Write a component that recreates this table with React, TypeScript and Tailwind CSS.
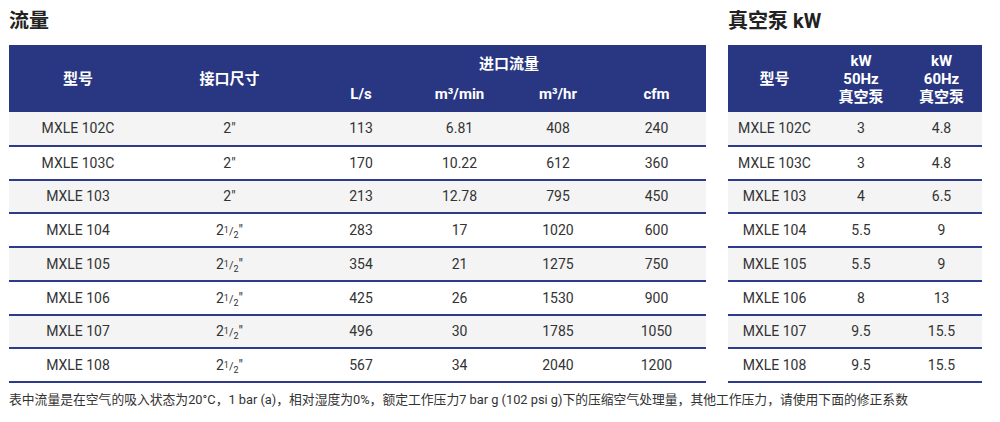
import React from 'react';

const FONT = { fontFamily: 'Roboto, "Noto Sans CJK SC", sans-serif' };

type Row = { model: string; size: 'two' | 'half'; ls: string; mmin: string; mhr: string; cfm: string };

const flowRows: Row[] = [
  { model: 'MXLE 102C', size: 'two', ls: '113', mmin: '6.81', mhr: '408', cfm: '240' },
  { model: 'MXLE 103C', size: 'two', ls: '170', mmin: '10.22', mhr: '612', cfm: '360' },
  { model: 'MXLE 103', size: 'two', ls: '213', mmin: '12.78', mhr: '795', cfm: '450' },
  { model: 'MXLE 104', size: 'half', ls: '283', mmin: '17', mhr: '1020', cfm: '600' },
  { model: 'MXLE 105', size: 'half', ls: '354', mmin: '21', mhr: '1275', cfm: '750' },
  { model: 'MXLE 106', size: 'half', ls: '425', mmin: '26', mhr: '1530', cfm: '900' },
  { model: 'MXLE 107', size: 'half', ls: '496', mmin: '30', mhr: '1785', cfm: '1050' },
  { model: 'MXLE 108', size: 'half', ls: '567', mmin: '34', mhr: '2040', cfm: '1200' },
];

const kwRows = [
  ['MXLE 102C', '3', '4.8'],
  ['MXLE 103C', '3', '4.8'],
  ['MXLE 103', '4', '6.5'],
  ['MXLE 104', '5.5', '9'],
  ['MXLE 105', '5.5', '9'],
  ['MXLE 106', '8', '13'],
  ['MXLE 107', '9.5', '15.5'],
  ['MXLE 108', '9.5', '15.5'],
];

const Size = ({ kind }: { kind: 'two' | 'half' }) =>
  kind === 'two' ? (
    <span>2"</span>
  ) : (
    <span>
      2<span className="relative -top-[2px] text-[9px]">1</span>
      <span className="text-[11px]">/</span>
      <span className="relative top-[3px] text-[9px]">2</span>"
    </span>
  );

const td = 'h-[33.75px] text-center border-b-2 border-[#2e3a8a] p-0 pt-[1px]';

export default function App() {
  return (
    <div className="w-[1000px] h-[422px] bg-white text-[#333] pl-[9px] pt-[8px]" style={FONT}>
      <div className="flex gap-[22px]">
        {/* flow table */}
        <div className="w-[697px]">
          <h2 className="text-[20px] font-bold text-[#222] leading-[26px] h-[37px]">流量</h2>
          <table className="w-full border-collapse text-[14px]">
            <colgroup>
              <col className="w-[138px]" />
              <col className="w-[165px]" />
              <col className="w-[98px]" />
              <col className="w-[99px]" />
              <col className="w-[98px]" />
              <col className="w-[99px]" />
            </colgroup>
            <thead className="bg-[#293681] text-white text-[15px] font-bold">
              <tr className="h-[35px]">
                <th rowSpan={2} className="align-middle pt-[2px]">型号</th>
                <th rowSpan={2} className="align-middle pt-[2px]">接口尺寸</th>
                <th colSpan={4} className="pt-[4px]">进口流量</th>
              </tr>
              <tr className="h-[32px]">
                <th className="pb-[4px]">L/s</th>
                <th className="pb-[4px]">m³/min</th>
                <th className="pb-[4px]">m³/hr</th>
                <th className="pb-[4px]">cfm</th>
              </tr>
            </thead>
            <tbody>
              {flowRows.map((r, i) => (
                <tr key={r.model} className={i % 2 === 0 ? 'bg-[#f4f4f4]' : 'bg-white'}>
                  <td className={td}>{r.model}</td>
                  <td className={td}><Size kind={r.size} /></td>
                  <td className={td}>{r.ls}</td>
                  <td className={td}>{r.mmin}</td>
                  <td className={td}>{r.mhr}</td>
                  <td className={td}>{r.cfm}</td>
                </tr>
              ))}
            </tbody>
          </table>
        </div>

        {/* vacuum pump kW */}
        <div className="w-[254px]">
          <h2 className="text-[20px] font-bold text-[#222] leading-[26px] h-[37px]">真空泵 kW</h2>
          <table className="w-full border-collapse text-[14px]">
            <colgroup>
              <col className="w-[93px]" />
              <col className="w-[80px]" />
              <col className="w-[81px]" />
            </colgroup>
            <thead className="bg-[#293681] text-white text-[15px] font-bold leading-[18px]">
              <tr className="h-[67px]">
                <th>型号</th>
                <th>kW<br />50Hz<br />真空泵</th>
                <th>kW<br />60Hz<br />真空泵</th>
              </tr>
            </thead>
            <tbody>
              {kwRows.map((r, i) => (
                <tr key={r[0]} className={i % 2 === 0 ? 'bg-[#f4f4f4]' : 'bg-white'}>
                  <td className={td}>{r[0]}</td>
                  <td className={td}>{r[1]}</td>
                  <td className={td}>{r[2]}</td>
                </tr>
              ))}
            </tbody>
          </table>
        </div>
      </div>

      <p className="mt-[9px] text-[12.8px] text-[#333] leading-[16px] whitespace-nowrap">
        表中流量是在空气的吸入状态为20°C，1 bar (a)，相对湿度为0%，额定工作压力7 bar g (102 psi g)下的压缩空气处理量，其他工作压力，请使用下面的修正系数
      </p>
    </div>
  );
}
